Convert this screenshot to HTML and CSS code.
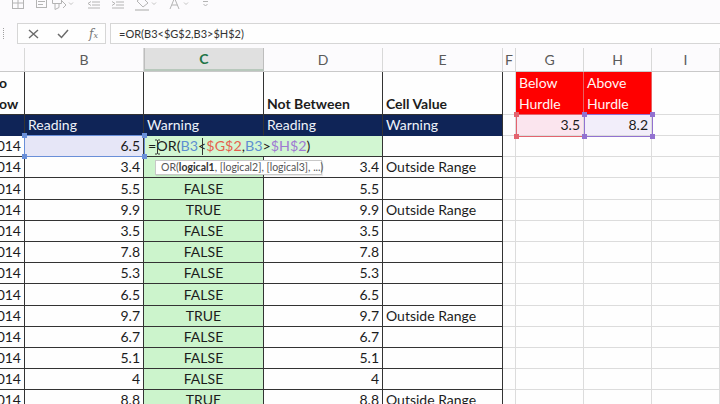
FILE: index.html
```html
<!DOCTYPE html>
<html>
<head>
<meta charset="utf-8">
<link rel="stylesheet" href="styles.css">
</head>
<body>
<div class="toolbar">
  <svg class="tbicons" width="220" height="16" viewBox="0 0 220 16">
    <g fill="none" stroke="#b4b4b4" stroke-width="1">
      <rect x="12.5" y="-2.5" width="11" height="11"/>
      <path d="M18 -2.5V8.5M12.5 3H23.5"/>
      <rect x="36.5" y="-1.5" width="10" height="9"/>
      <path d="M38 1.5h7M38 4.5h5"/>
      <path d="M52.5 -1.5h9v5h-9zM55 3.5v6l4 -2v-4"/>
      <path d="M62 1l4 4l-3 3"/>
      <path d="M69 2.5l2 2l2 -2" stroke="#c4c4c4"/>
      <path d="M88 -1h12M92 2h8M92 5h8M88 8h12M91 1.5l-3 2l3 2"/>
      <path d="M112 -1h12M116 2h8M116 5h8M112 8h12M112 1.5l3 2l-3 2"/>
      <path d="M137 1l5 -4l6 6l-5 4z"/>
      <path d="M135 10h14" stroke="#d2d2d2" stroke-width="2"/>
      <path d="M152 2.5l2 2l2 -2" stroke="#c4c4c4"/>
      <path d="M170 9l4.5 -11l4.5 11M171.8 5h5.4"/>
      <path d="M184 2.5l2 2l2 -2" stroke="#c4c4c4"/>
      <path d="M203 1.5h5M203.5 4l2 2l2 -2"/>
    </g>
  </svg>
</div>
<div class="fbar">
  <div class="grip"></div>
  <div class="fbtns">
    <svg width="11" height="10" viewBox="0 0 11 10"><path d="M1 1l9 8M10 1l-9 8" stroke="#6a6a6a" stroke-width="1.4" fill="none"/></svg>
    <svg width="12" height="10" viewBox="0 0 12 10"><path d="M1 5l3.5 3.5L11 1" stroke="#6a6a6a" stroke-width="1.5" fill="none"/></svg>
    <span class="fx"><i>f</i><span class="fxx">x</span></span>
  </div>
  <div class="finput">=OR(B3&lt;$G$2,B3&gt;$H$2)</div>
</div>
<div class="colhead">
  <div class="ch"></div>
  <div class="ch">B</div>
  <div class="ch sel">C</div>
  <div class="ch">D</div>
  <div class="ch">E</div>
  <div class="ch">F</div>
  <div class="ch">G</div>
  <div class="ch">H</div>
  <div class="ch">I</div>
</div>
<div class="sheet">
  <!-- row 1 -->
  <div class="c d top a1"><span>o</span><span>ow</span></div>
  <div class="c d"></div>
  <div class="c d"></div>
  <div class="c d b">Not Between</div>
  <div class="c d b">Cell Value</div>
  <div class="c"></div>
  <div class="c hd">Below<br>Hurdle</div>
  <div class="c hd">Above<br>Hurdle</div>
  <div class="c"></div>
  <!-- row 2 -->
  <div class="c d n"></div>
  <div class="c d n">Reading</div>
  <div class="c d n">Warning</div>
  <div class="c d n">Reading</div>
  <div class="c d n">Warning</div>
  <div class="c"></div>
  <div class="c r pink">3.5</div>
  <div class="c r lav">8.2</div>
  <div class="c"></div>
  <!-- row 3 -->
  <div class="c d r">014</div>
  <div class="c d r refb">6.5</div>
  <div class="c d edit"><span>=OR(</span><span class="rb">B3</span><span>&lt;</span><span class="rg">$G$2</span><span>,</span><span class="rb">B3</span><span>&gt;</span><span class="rh">$H$2</span><span>)</span></div>
  <div class="c d"></div>
  <div class="c"></div><div class="c"></div><div class="c"></div><div class="c"></div>
  <!-- row 4 -->
  <div class="c d r">014</div><div class="c d r">3.4</div><div class="c d g"></div><div class="c d r">3.4</div><div class="c d">Outside Range</div>
  <div class="c"></div><div class="c"></div><div class="c"></div><div class="c"></div>
  <!-- row 5 -->
  <div class="c d r">014</div><div class="c d r">5.5</div><div class="c d g">FALSE</div><div class="c d r">5.5</div><div class="c d"></div>
  <div class="c"></div><div class="c"></div><div class="c"></div><div class="c"></div>
  <!-- row 6 -->
  <div class="c d r">014</div><div class="c d r">9.9</div><div class="c d g">TRUE</div><div class="c d r">9.9</div><div class="c d">Outside Range</div>
  <div class="c"></div><div class="c"></div><div class="c"></div><div class="c"></div>
  <!-- row 7 -->
  <div class="c d r">014</div><div class="c d r">3.5</div><div class="c d g">FALSE</div><div class="c d r">3.5</div><div class="c d"></div>
  <div class="c"></div><div class="c"></div><div class="c"></div><div class="c"></div>
  <!-- row 8 -->
  <div class="c d r">014</div><div class="c d r">7.8</div><div class="c d g">FALSE</div><div class="c d r">7.8</div><div class="c d"></div>
  <div class="c"></div><div class="c"></div><div class="c"></div><div class="c"></div>
  <!-- row 9 -->
  <div class="c d r">014</div><div class="c d r">5.3</div><div class="c d g">FALSE</div><div class="c d r">5.3</div><div class="c d"></div>
  <div class="c"></div><div class="c"></div><div class="c"></div><div class="c"></div>
  <!-- row 10 -->
  <div class="c d r">014</div><div class="c d r">6.5</div><div class="c d g">FALSE</div><div class="c d r">6.5</div><div class="c d"></div>
  <div class="c"></div><div class="c"></div><div class="c"></div><div class="c"></div>
  <!-- row 11 -->
  <div class="c d r">014</div><div class="c d r">9.7</div><div class="c d g">TRUE</div><div class="c d r">9.7</div><div class="c d">Outside Range</div>
  <div class="c"></div><div class="c"></div><div class="c"></div><div class="c"></div>
  <!-- row 12 -->
  <div class="c d r">014</div><div class="c d r">6.7</div><div class="c d g">FALSE</div><div class="c d r">6.7</div><div class="c d"></div>
  <div class="c"></div><div class="c"></div><div class="c"></div><div class="c"></div>
  <!-- row 13 -->
  <div class="c d r">014</div><div class="c d r">5.1</div><div class="c d g">FALSE</div><div class="c d r">5.1</div><div class="c d"></div>
  <div class="c"></div><div class="c"></div><div class="c"></div><div class="c"></div>
  <!-- row 14 -->
  <div class="c d r">014</div><div class="c d r">4</div><div class="c d g">FALSE</div><div class="c d r">4</div><div class="c d"></div>
  <div class="c"></div><div class="c"></div><div class="c"></div><div class="c"></div>
  <!-- row 15 -->
  <div class="c d r">014</div><div class="c d r">8.8</div><div class="c d g">TRUE</div><div class="c d r">8.8</div><div class="c d">Outside Range</div>
  <div class="c"></div><div class="c"></div><div class="c"></div><div class="c"></div>

  <!-- overlays -->
  <div class="selbox sb-b"><i class="h tl"></i><i class="h tr"></i><i class="h bl"></i><i class="h br"></i></div>
  <div class="selbox sb-g"><i class="h tl"></i><i class="h tr"></i><i class="h bl"></i><i class="h br"></i></div>
  <div class="selbox sb-h"><i class="h tl"></i><i class="h tr"></i><i class="h bl"></i><i class="h br"></i></div>
  <div class="caret"></div>
  <svg class="ibeam" width="7" height="16" viewBox="0 0 7 16"><path d="M1 1h2l.5 .5l.5 -.5h2M3.5 1.5v13M1 15h2l.5 -.5l.5 .5h2" stroke="#333" stroke-width="1" fill="none"/></svg>
  <div class="tip">OR(<b>logical1</b>, [logical2], [logical3], ...)</div>
</div>
</body>
</html>
```
FILE: styles.css
```css
* { box-sizing: border-box; margin: 0; padding: 0; }
:root { --cols: 25px 119px 120px 119px 120px 13px 68px 68px 68px; }
body {
  margin: 0;
  width: 720px;
  height: 404px;
  overflow: hidden;
  background: #fcfbfd;
  font-family: Lato, "Liberation Sans", sans-serif;
  color: #1c1c1c;
}
.toolbar { height: 23px; overflow: hidden; }
.tbicons { display: block; }

.fbar { height: 21px; display: flex; }
.grip {
  width: 17px;
  position: relative;
}
.grip::before {
  content: "";
  position: absolute;
  left: 3px; top: 5px;
  width: 1px; height: 11px;
  border-left: 1px dotted #a0a0a0;
}
.fbtns {
  width: 89px;
  background: #fefefe;
  border: 1px solid #d6d6d6;
  display: flex;
  align-items: center;
  padding-left: 10px;
  gap: 18px;
}
.fx {
  font-family: "DejaVu Serif", "Liberation Serif", serif;
  font-size: 12px;
  color: #777;
  margin-left: 2px;
}
.fxx { font-size: 8px; font-style: italic; }
.finput {
  flex: 1;
  margin-left: 4px;
  background: #fefefe;
  border: 1px solid #d6d6d6;
  border-right: none;
  font-size: 11px;
  line-height: 19px;
  padding-left: 8px;
  color: #333;
}

.colhead {
  margin-top: 4px;
  height: 24px;
  display: grid;
  grid-template-columns: var(--cols);
  border-bottom: 1px solid #c9c9c9;
}
.ch {
  border-right: 1px solid #d8d8d8;
  font-size: 14px;
  color: #5a5a5a;
  display: flex;
  align-items: center;
  justify-content: center;
  background: #fcfbfd;
}
.ch.sel {
  background: #e0e0e0;
  color: #217346;
  font-weight: bold;
  border-left: 1px solid #bdbdbd;
  border-right-color: #bdbdbd;
  border-bottom: 2px solid #b8c8bc;
}

.sheet {
  position: relative;
  display: grid;
  grid-template-columns: var(--cols);
  grid-template-rows: 43px 21px repeat(13, 21.2px);
  background: #fefefe;
}
.c {
  border-right: 1px solid #dcdcdc;
  border-bottom: 1px solid #dcdcdc;
  font-size: 14px;
  line-height: 20px;
  padding: 0 3px;
  white-space: nowrap;
  overflow: hidden;
  display: flex;
  align-items: flex-end;
}
.d { border-right-color: #333; border-bottom-color: #333; }
.r { justify-content: flex-end; }
.b { font-weight: bold; }
.top { align-items: flex-start; }
.a1 {
  flex-direction: column;
  font-weight: bold;
  line-height: 21px;
  padding: 0;
  margin-left: -1px;
}
.n {
  background: #0f2457;
  color: #eef2fa;
  border-bottom-color: #0f2457;
}
.hd {
  background: #ff0000;
  color: #fff4f4;
  align-items: flex-start;
  line-height: 21px;
  border-right-color: #e86060;
  border-bottom-color: #f4f4f4;
}
.pink { background: #fbe5ee; }
.lav { background: #f2eefa; }
.refb { background: #e6e6f7; }
.g {
  background: #ccf4cc;
  justify-content: center;
}
.edit {
  grid-column: span 2;
  background: #d2f6d2;
  padding-left: 4px;
  overflow: visible;
  font-size: 14.3px;
}
.rb { color: #5e8fd1; }
.rg { color: #e5614e; }
.rh { color: #9f7ad2; }

.selbox {
  position: absolute;
  border: 1px solid;
}
.sb-b { left: 24px; top: 63px; width: 121px; height: 22px; border-color: #6a8fd8; color: #6a8fd8; }
.sb-g { left: 516px; top: 42px; width: 69px; height: 23px; border-color: #e3646f; color: #e3646f; }
.sb-h { left: 584px; top: 42px; width: 69px; height: 23px; border-color: #9272d0; color: #9272d0; }
.h {
  position: absolute;
  width: 5px;
  height: 5px;
  background: currentColor;
}
.tl { left: -3px; top: -3px; }
.tr { right: -3px; top: -3px; }
.bl { left: -3px; bottom: -3px; }
.br { right: -3px; bottom: -3px; }

.caret {
  position: absolute;
  left: 202px;
  top: 66px;
  width: 1px;
  height: 17px;
  background: #333;
}
.ibeam {
  position: absolute;
  left: 154px;
  top: 67px;
}
.tip {
  position: absolute;
  left: 155px;
  top: 88px;
  width: 167px;
  height: 15px;
  background: #fff;
  border: 1px solid #c8c8c8;
  font-size: 10.5px;
  line-height: 13px;
  color: #555;
  padding-left: 5px;
  white-space: nowrap;
  box-shadow: 1px 1px 1px rgba(0,0,0,0.08);
}
.tip b { color: #333; }
```
